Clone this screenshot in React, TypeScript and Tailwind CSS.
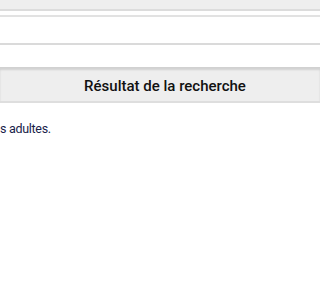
export default function App() {
  return (
    <div className="w-[320px] h-[300px] bg-white overflow-hidden" style={{ fontFamily: "Roboto, sans-serif" }}>
      <div className="h-[9px] bg-[#eeeeee]" />
      <div className="h-[2px] bg-[#dcdcdc]" />
      <div className="h-[4px] bg-white" />
      <div className="h-[2px] bg-[#e2e2e2]" />
      <div className="h-[26px] bg-white" />
      <div className="h-[2px] bg-[#dadada]" />
      <div className="h-[22px] bg-white" />
      <div className="h-[36px] bg-[#eeeeee] border-b-2 border-[#dedede] shadow-[inset_0_3px_2px_rgba(0,0,0,0.12)] flex items-center justify-center pl-[10px] pt-[4px]">
        <span className="text-[15px] font-medium text-[#111]">Résultat de la recherche</span>
      </div>
      <div className="pt-[18px] text-[12.5px] leading-[16px] tracking-[-0.3px] text-[#18224a]">s adultes.</div>
    </div>
  );
}
